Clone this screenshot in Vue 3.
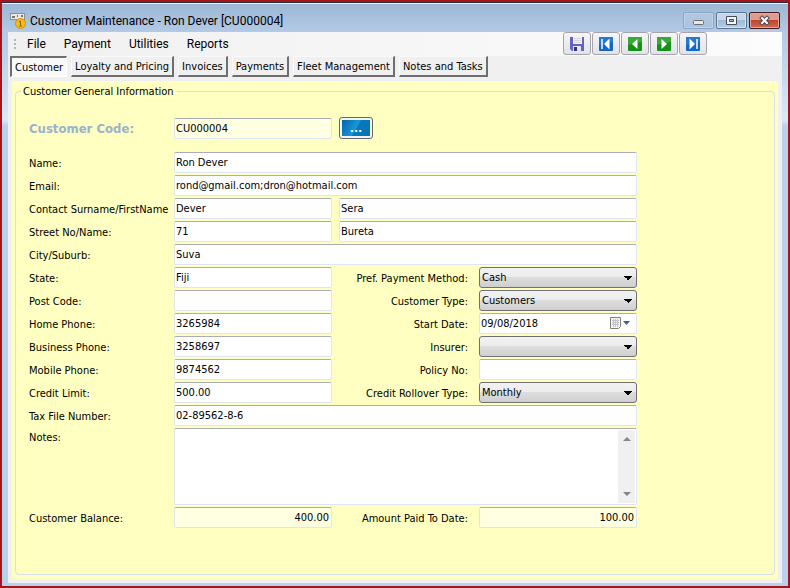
<script setup>
import { ref } from 'vue'

const menus = ['File', 'Payment', 'Utilities', 'Reports']
const tabs = ['Customer', 'Loyalty and Pricing', 'Invoices', 'Payments', 'Fleet Management', 'Notes and Tasks']
const active = ref('Customer')

const rows = [
  { id: 'name', label: 'Name:', value: 'Ron Dever', kind: 'wide' },
  { id: 'email', label: 'Email:', value: 'rond@gmail.com;dron@hotmail.com', kind: 'wide' },
  { id: 'surname', label: 'Contact Surname/FirstName', value: 'Dever', kind: 'pair', second: 'Sera', secondName: 'First name' },
  { id: 'street', label: 'Street No/Name:', value: '71', kind: 'pair', second: 'Bureta', secondName: 'Street name' },
  { id: 'city', label: 'City/Suburb:', value: 'Suva', kind: 'wide' },
  { id: 'state', label: 'State:', value: 'Fiji', right: { id: 'method', label: 'Pref. Payment Method:', type: 'select', value: 'Cash' } },
  { id: 'post', label: 'Post Code:', value: '', right: { id: 'ctype', label: 'Customer Type:', type: 'select', value: 'Customers' } },
  { id: 'home', label: 'Home Phone:', value: '3265984', right: { id: 'start', label: 'Start Date:', type: 'date', value: '09/08/2018' } },
  { id: 'business', label: 'Business Phone:', value: '3258697', right: { id: 'insurer', label: 'Insurer:', type: 'select', value: '' } },
  { id: 'mobile', label: 'Mobile Phone:', value: '9874562', right: { id: 'policy', label: 'Policy No:', type: 'text', value: '' } },
  { id: 'credit', label: 'Credit Limit:', value: '500.00', right: { id: 'rollover', label: 'Credit Rollover Type:', type: 'select', value: 'Monthly' } },
  { id: 'tax', label: 'Tax File Number:', value: '02-89562-8-6', kind: 'wide' }
]
</script>

<template>
  <div class="window">
    <header class="titlebar">
      <svg class="app-icon" viewBox="0 0 16 16" aria-hidden="true">
        <rect x="0.5" y="0.5" width="14" height="6" fill="#e9e9e6" stroke="#8f8f89" />
        <path d="M2 3h3v2H2zM7 2h1v2H7zM11 2h2v2h-2z" fill="#77776f" />
        <circle cx="10.5" cy="10.5" r="5" fill="#f3bd16" stroke="#d0940f" />
        <path d="M9 9l1.500-1v5M9 13h3" fill="none" stroke="#8f6508" />
      </svg>
      <h1>Customer Maintenance - Ron Dever [CU000004]</h1>
      <div class="win-buttons">
        <button type="button" class="dim" aria-label="Minimize">
          <svg viewBox="0 0 29 15"><rect x="9.5" y="7.5" width="10" height="4" rx="1" fill="#e9e8e2" stroke="#686d72" /></svg>
        </button>
        <button type="button" aria-label="Maximize">
          <svg viewBox="0 0 29 15"><path fill-rule="evenodd" d="M9.500 3.500h10v8h-10zM12.500 6.500h4v2h-4z" fill="#f5f5f3" stroke="#454c5c" /></svg>
        </button>
        <button type="button" class="close" aria-label="Close">
          <svg viewBox="0 0 29 15"><path d="M12 5l5 5M17 5l-5 5" stroke="#4b4552" stroke-width="4" stroke-linecap="square" /><path d="M12 5l5 5M17 5l-5 5" stroke="#fff" stroke-width="2" stroke-linecap="square" /></svg>
        </button>
      </div>
    </header>

    <main class="client">
      <div class="menubar">
        <span class="grip"></span>
        <nav class="menus">
          <button v-for="m in menus" :key="m" type="button">{{ m }}</button>
        </nav>
        <div class="tools">
          <button type="button" aria-label="Save">
            <svg viewBox="0 0 16 16"><path d="M1 1h14v14H3l-2-2z" fill="#6461c0" /><rect x="4" y="0" width="9" height="8" fill="#f3f3f3" /><path d="M5 2.500h7M5 4.500h7M5 6.500h7" stroke="#d4d4d8" /><rect x="4" y="10" width="8" height="6" fill="#e4e7f3" /><path d="M5 11h3v4H5z" fill="#343276" /></svg>
          </button>
          <button type="button" aria-label="First record">
            <svg viewBox="0 0 16 16"><rect x="1" y="1" width="14" height="14" rx="1" fill="#1267c8" /><path d="M1 1h14v5L1 9z" fill="#2678d2" /><path d="M4 3v10" stroke="#fff" stroke-width="1.500" /><path d="M11.500 2.500v11L6 8z" fill="#fff" /></svg>
          </button>
          <button type="button" aria-label="Previous record">
            <svg viewBox="0 0 16 16"><rect x="1" y="1" width="14" height="14" rx="1" fill="#159018" /><path d="M1 1h14v5L1 9z" fill="#38a838" /><path d="M10.500 3v10L5 8z" fill="#fff" /></svg>
          </button>
          <button type="button" aria-label="Next record">
            <svg viewBox="0 0 16 16"><rect x="1" y="1" width="14" height="14" rx="1" fill="#159018" /><path d="M1 1h14v5L1 9z" fill="#38a838" /><path d="M5.500 3v10l5.500-5z" fill="#fff" /></svg>
          </button>
          <button type="button" aria-label="Last record">
            <svg viewBox="0 0 16 16"><rect x="1" y="1" width="14" height="14" rx="1" fill="#1267c8" /><path d="M1 1h14v5L1 9z" fill="#2678d2" /><path d="M12 3v10" stroke="#fff" stroke-width="1.500" /><path d="M4.500 2.500v11L10 8z" fill="#fff" /></svg>
          </button>
        </div>
      </div>

      <div class="tabs" role="tablist">
        <button v-for="t in tabs" :key="t" type="button" role="tab" :aria-selected="active === t" :class="{ active: active === t }" @click="active = t">{{ t }}</button>
      </div>

      <section class="page">
        <fieldset>
          <legend>Customer General Information</legend>
          <form class="form" @submit.prevent>
            <div class="row code-row">
              <label for="code" class="code-label">Customer Code:</label>
              <input id="code" class="readonly" readonly value="CU000004" />
              <button type="button" class="browse" aria-label="Browse customers"><span>...</span></button>
            </div>

            <div v-for="r in rows" :key="r.id" class="row">
              <label :for="r.id">{{ r.label }}</label>
              <input :id="r.id" :value="r.value" :class="{ wide: r.kind === 'wide' }" />
              <input v-if="r.kind === 'pair'" class="second" :value="r.second" :aria-label="r.secondName" />
              <template v-if="r.right">
                <label :for="r.right.id" class="right-label">{{ r.right.label }}</label>
                <select v-if="r.right.type === 'select'" :id="r.right.id">
                  <option>{{ r.right.value }}</option>
                </select>
                <div v-else-if="r.right.type === 'date'" class="date">
                  <input :id="r.right.id" :value="r.right.value" />
                  <button type="button" aria-label="Open calendar">
                    <svg viewBox="0 0 22 13"><path d="M.5.5h10v9l-2 2h-8z" fill="#f5f5f5" stroke="#837f7a" /><path d="M2 3.500h7M2 5.500h7M2 7.500h7M3.500 2v8M5.500 2v8M7.500 2v8" stroke="#c0c3cc" /><path d="M13 4h7l-3.500 4z" fill="#41608f" /></svg>
                  </button>
                </div>
                <input v-else :id="r.right.id" :value="r.right.value" />
              </template>
            </div>

            <div class="row notes-row">
              <label for="notes">Notes:</label>
              <div class="notes">
                <textarea id="notes"></textarea>
                <div class="scroll" aria-hidden="true">
                  <svg viewBox="0 0 8 5"><path d="M0 5l4-4 4 4z" fill="#84868a" /></svg>
                  <svg viewBox="0 0 8 5"><path d="M0 0h8L4 4z" fill="#84868a" /></svg>
                </div>
              </div>
            </div>

            <div class="row">
              <label for="balance">Customer Balance:</label>
              <input id="balance" class="readonly amount" readonly value="400.00" />
              <label for="paid" class="right-label">Amount Paid To Date:</label>
              <input id="paid" class="readonly amount" readonly value="100.00" />
            </div>
          </form>
        </fieldset>
      </section>
    </main>
  </div>
</template>

<style>
body {
  margin: 0;
}
</style>

<style scoped>
* {
  box-sizing: border-box;
}
.window {
  min-height: 100vh;
  display: flex;
  flex-direction: column;
  border: 2px solid #a5151d;
  padding: 0 6px 3px;
  background: linear-gradient(#9ab5d3 0, #b3cae5 30px, #c9dcee 80px, #dce8f5 118px, #b9d1ea 124px, #b9d1ea 100%);
  font: 11px/14px "DejaVu Sans Condensed", "DejaVu Sans", sans-serif;
  color: #000;
}
button, input, select, textarea {
  font: inherit;
  color: inherit;
  margin: 0;
}
svg {
  display: block;
}
.titlebar {
  height: 30px;
  display: flex;
  align-items: center;
  border-top: 1px solid #29323c;
  box-shadow: inset 0 1px #e8f1fa;
  margin: 0 -6px;
  padding: 6px 8px 0;
}
.app-icon {
  width: 16px;
  height: 16px;
}
h1 {
  flex: 1;
  margin: 0 0 0 4px;
  font: 12px/16px Roboto, "Open Sans", sans-serif;
}
.win-buttons {
  display: flex;
  gap: 2px;
}
.win-buttons button {
  width: 31px;
  height: 17px;
  padding: 0;
  border: 1px solid #5d7591;
  border-radius: 2px;
  background: linear-gradient(#c4d6ea 0 48%, #9fb9d6 50%, #b7cee6);
  box-shadow: inset 0 0 0 1px #d4e2f1;
}
.win-buttons .dim {
  border-color: #8ba5c2;
  background: linear-gradient(#b3c9e1, #a9c2de);
  box-shadow: inset 0 0 0 1px #bfd3e8;
}
.win-buttons .close {
  border-color: #451a20;
  background: linear-gradient(#dc9c91 0 44%, #bd432b 48%, #cf6c54);
  box-shadow: inset 0 0 0 1px #e3a79c;
}
.win-buttons svg {
  width: 29px;
  height: 15px;
}
.client {
  flex: 1;
  display: flex;
  flex-direction: column;
  background: #f0f0f0;
}
.menubar {
  height: 24px;
  display: flex;
  align-items: center;
  background: linear-gradient(90deg, #f0f0f0, #fcfcfc);
  padding: 0 75px 0 6px;
}
.grip {
  width: 2px;
  height: 11px;
  background: repeating-linear-gradient(#b5b5b5 0 2px, transparent 2px 4px);
}
.menus {
  flex: 1;
  display: flex;
  gap: 18px;
  padding-left: 11px;
}
.menus button {
  border: 0;
  padding: 0;
  background: none;
  font: 12px/16px Roboto, "Open Sans", sans-serif;
}
.tools {
  display: flex;
  align-self: flex-start;
  gap: 1px;
}
.tools button {
  width: 28px;
  height: 23px;
  padding: 2px 5px;
  border: 1px solid #a5a5ae;
  border-radius: 3px;
  background: linear-gradient(#f6f6f8, #e2e2e8);
}
.tools svg {
  width: 16px;
  height: 16px;
}
.tabs {
  display: flex;
  gap: 4px;
  height: 25px;
  padding: 0 2px 4px;
}
.tabs button {
  padding: 1px 3px 0;
  border: 1px solid;
  border-width: 1px 2px 2px 1px;
  border-color: #fafafa #6e6e6e #6e6e6e #fafafa;
  background: #f0f0f0;
  white-space: nowrap;
}
.tabs .active {
  border-width: 2px 1px 1px 2px;
  border-color: #6e6e6e #fff #fff #6e6e6e;
  background: #f9f9f9;
}
.page {
  flex: 1;
  display: flex;
  margin: 0 4px 4px;
  padding: 3px 3px 4px;
  background: #ffffc1;
}
fieldset {
  flex: 1;
  min-width: 0;
  margin: 0;
  padding: 0 13px;
  border: 1px solid #d5dfe5;
  border-radius: 4px;
}
legend {
  margin-left: -8px;
  padding: 1px 3px 0 2px;
  line-height: 14px;
}
.form {
  display: flex;
  flex-direction: column;
  gap: 2px;
  max-width: 608px;
  padding-top: 18px;
}
.row {
  display: grid;
  grid-template-columns: 138px 158px minmax(0, 1fr) 158px;
  column-gap: 7px;
}
.row > label {
  height: 21px;
  line-height: 23px;
  white-space: nowrap;
}
.code-row {
  height: 21px;
  margin-bottom: 12px;
  align-items: center;
}
.row > .code-label {
  font: bold 13px/21px "DejaVu Sans Condensed", "DejaVu Sans", sans-serif;
  color: #9bb2ce;
}
input, textarea {
  width: 100%;
  min-width: 0;
  height: 21px;
  padding: 0 2px 0 1px;
  border: 1px solid;
  border-color: #abadb3 #dfe6ee #dde5ee #e2e3ea;
  border-radius: 2px;
  background: #fff;
  outline: 0;
}
.wide, .second, .notes {
  grid-column-end: 5;
}
.wide, .notes {
  grid-column-start: 2;
}
.second {
  grid-column-start: 3;
}
.readonly {
  background: #ffffe1;
}
.amount {
  text-align: right;
}
.row > .right-label {
  text-align: right;
  padding-right: 4px;
}
select {
  appearance: none;
  width: 100%;
  height: 21px;
  padding: 1px 18px 0 2px;
  border: 1px solid #707070;
  border-radius: 3px;
  background: conic-gradient(from -45deg at 50% 100%, #000 90deg, transparent 0) right 4px center / 8px 4px no-repeat, linear-gradient(#f2f2f2, #ebebeb 50%, #dddddd 50%, #cfcfcf);
}
.date {
  display: flex;
  height: 21px;
  border: 1px solid;
  border-color: #abadb3 #dfe6ee #dde5ee #e2e3ea;
  border-radius: 2px;
  background: #fff;
}
.date input {
  flex: 1;
  height: 19px;
  padding: 0 1px;
  border: 0;
}
.date button {
  width: 26px;
  padding: 0;
  border: 0;
  background: none;
}
.date svg {
  width: 22px;
  height: 13px;
}
.browse {
  width: 34px;
  height: 22px;
  padding: 2px;
  border: 1px solid #66696c;
  border-radius: 3px;
  background: #f4f4f4;
}
.browse span {
  display: block;
  height: 16px;
  background: linear-gradient(120deg, #0764a9, #1599dc 50%, #0878bd 52%, #0873b5);
  color: #fff;
  font: bold 11px/18px "DejaVu Sans", sans-serif;
}
.notes-row > label {
  line-height: 19px;
}
.notes {
  display: flex;
  height: 77px;
  padding: 1px;
  border: 1px solid;
  border-color: #abadb3 #dfe6ee #dde5ee #e2e3ea;
  border-radius: 2px;
  background: #fff;
}
.notes textarea {
  flex: 1;
  height: 100%;
  border: 0;
  resize: none;
}
.scroll {
  width: 17px;
  display: flex;
  flex-direction: column;
  justify-content: space-between;
  align-items: center;
  padding: 6px 0;
  background: #f0f0f0;
}
.scroll svg {
  width: 8px;
  height: 5px;
}
</style>
